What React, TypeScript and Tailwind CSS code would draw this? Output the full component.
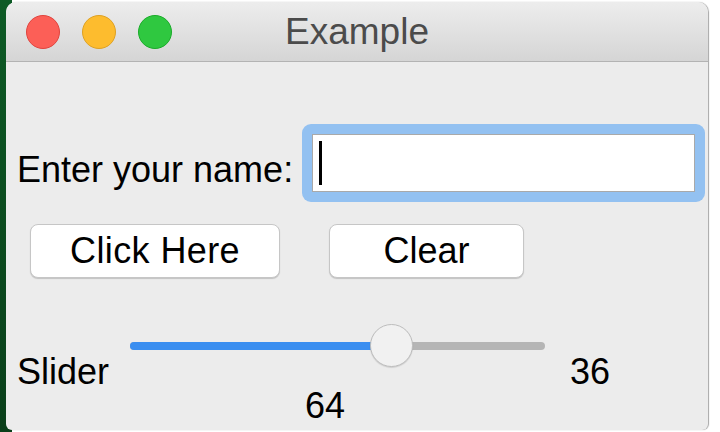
import React from "react";

export default function App() {
  const font = { fontFamily: '"Liberation Sans", Arial, Helvetica, sans-serif' };
  return (
    <div className="w-[720px] h-[432px] bg-white flex overflow-hidden" style={font}>
      <div className="w-[12px] h-full bg-gradient-to-b from-[#0d5a25] to-[#0a3f1a] shrink-0" />
      <div className="-ml-[6px] mt-[2px] w-[702px] h-[428px] rounded-t-[10px] rounded-b-[6px] bg-[#ececec] flex flex-col overflow-hidden shadow-[1px_0_1px_rgba(0,0,0,0.35)] shrink-0">
        {/* Title bar */}
        <div className="relative h-[60px] shrink-0 bg-gradient-to-b from-[#ededed] to-[#d5d5d5] border-b border-[#b3b3b3] flex items-center">
          <div className="flex items-center gap-[22px] pl-[20px]">
            <div className="w-[34px] h-[34px] rounded-full bg-[#fc5f57] border border-[#e0443e]" />
            <div className="w-[34px] h-[34px] rounded-full bg-[#fdbc2e] border border-[#dea123]" />
            <div className="w-[34px] h-[34px] rounded-full bg-[#2fc840] border border-[#1aab29]" />
          </div>
          <div className="absolute inset-0 flex items-center justify-center text-[37px] leading-[37px] text-[#4b4b4b] pointer-events-none">
            Example
          </div>
        </div>

        {/* Content */}
        <div className="flex flex-col pt-[62px]">
          {/* Row 1 */}
          <div className="flex items-start pl-[11px] h-[78px]">
            <div className="w-[285px] mt-[28px] text-[36px] leading-[36px] text-black whitespace-nowrap">
              Enter your name:
            </div>
            <div className="w-[403px] h-[78px] rounded-[9px] bg-[#93c1f1] p-[10px]">
              <div className="w-full h-full bg-white border border-[#a9a9a9] flex items-center pl-[6px]">
                <div className="w-[3px] h-[44px] bg-black" />
              </div>
            </div>
          </div>

          {/* Row 2 */}
          <div className="flex items-start mt-[22px] pl-[24px]">
            <button className="w-[250px] h-[54px] bg-white border border-[#c6c6c6] rounded-[8px] shadow-[0_1px_1px_rgba(0,0,0,0.18)] text-[36px] leading-[36px] text-black flex items-center justify-center tracking-[0.4px]">
              Click Here
            </button>
            <button className="ml-[49px] w-[195px] h-[54px] bg-white border border-[#c6c6c6] rounded-[8px] shadow-[0_1px_1px_rgba(0,0,0,0.18)] text-[36px] leading-[36px] text-black flex items-center justify-center">
              Clear
            </button>
          </div>

          {/* Row 3 */}
          <div className="flex items-start mt-[46px] pl-[11px]">
            <div className="w-[113px] mt-[30px] text-[36px] leading-[36px] text-black">Slider</div>
            <div className="w-[415px] flex flex-col">
              <div className="relative h-[43px] flex items-center">
                <div className="w-full h-[8px] rounded-full bg-[#b5b5b5] flex overflow-hidden">
                  <div className="w-[262px] h-full bg-[#3a8ef0]" />
                </div>
                <div className="absolute left-[240px] top-0 w-[43px] h-[43px] rounded-full bg-[#f1f1f1] border border-[#bdbdbd] shadow-[0_1px_1px_rgba(0,0,0,0.12)]" />
              </div>
              <div className="ml-[175px] mt-[21px] text-[36px] leading-[36px] text-black">64</div>
            </div>
            <div className="ml-[25px] mt-[30px] text-[36px] leading-[36px] text-black">36</div>
          </div>
        </div>
      </div>
    </div>
  );
}
